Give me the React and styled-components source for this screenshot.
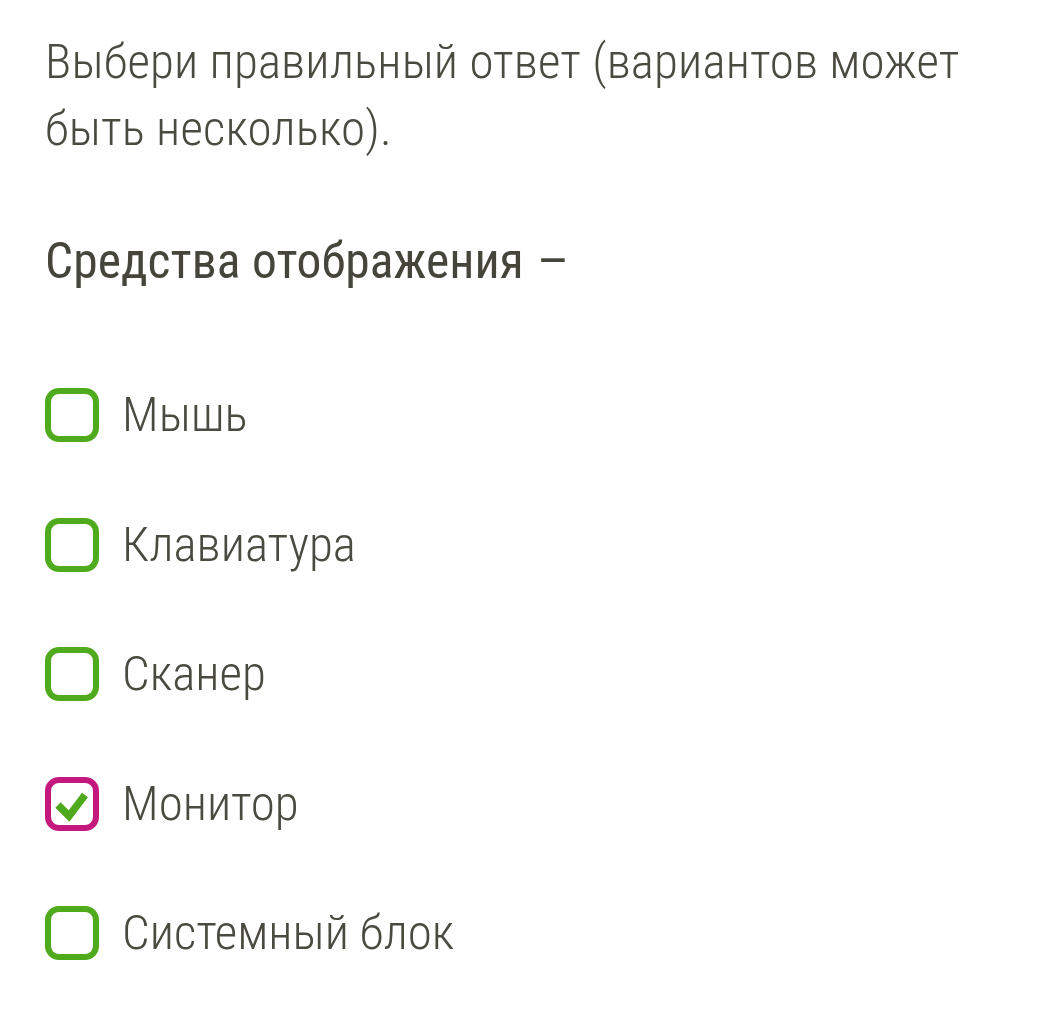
import React from "react";
import styled, { createGlobalStyle } from "styled-components";

const Global = createGlobalStyle`
  html, body { margin: 0; padding: 0; background: #ffffff; }
  body { font-family: Roboto, "Liberation Sans", sans-serif; }
`;

const Page = styled.div`
  padding: 28px 40px 0 45px;
  font-stretch: 75%;
  color: #4a4a41;
`;

const Prompt = styled.p`
  margin: 0;
  font-size: 49px;
  line-height: 67px;
  font-weight: 300;
  letter-spacing: 0.15px;
`;

const Question = styled.h2`
  margin: 66px 0 0;
  font-size: 49.5px;
  line-height: 67px;
  font-weight: 400;
  color: #45453b;
  letter-spacing: 0.1px;
`;

const Dash = styled.span`
  display: inline-block;
  margin-left: 4px;
  transform: scaleX(1.15);
`;

const Options = styled.ul`
  list-style: none;
  margin: 93px 0 0;
  padding: 0;
  display: flex;
  flex-direction: column;
  gap: 75.5px;
`;

const Option = styled.li`
  display: flex;
  align-items: center;
  gap: 23px;
  height: 54px;
`;

const Box = styled.span`
  box-sizing: border-box;
  width: 54px;
  height: 54px;
  border: 6px solid ${(p) => (p.$checked ? "#c4187c" : "#50aa1e")};
  border-radius: 14px;
  display: grid;
  place-items: center;
  flex: none;
`;

const Label = styled.span`
  font-size: 49px;
  font-weight: 300;
  line-height: 54px;
`;

const items = [
  { text: "Мышь" },
  { text: "Клавиатура" },
  { text: "Сканер" },
  { text: "Монитор", checked: true },
  { text: "Системный блок" },
];

export default function App() {
  return (
    <Page>
      <Global />
      <Prompt>Выбери правильный ответ (вариантов может быть несколько).</Prompt>
      <Question>
        Средства отображения <Dash>–</Dash>
      </Question>
      <Options>
        {items.map((it) => (
          <Option key={it.text}>
            <Box $checked={it.checked}>
              {it.checked && (
                <svg width="42" height="42" viewBox="0 0 42 42">
                  <path d="M7 22 L18 33 L34 12" fill="none" stroke="#4ea91c" strokeWidth="7.5" strokeLinejoin="miter" />
                </svg>
              )}
            </Box>
            <Label>{it.text}</Label>
          </Option>
        ))}
      </Options>
    </Page>
  );
}
